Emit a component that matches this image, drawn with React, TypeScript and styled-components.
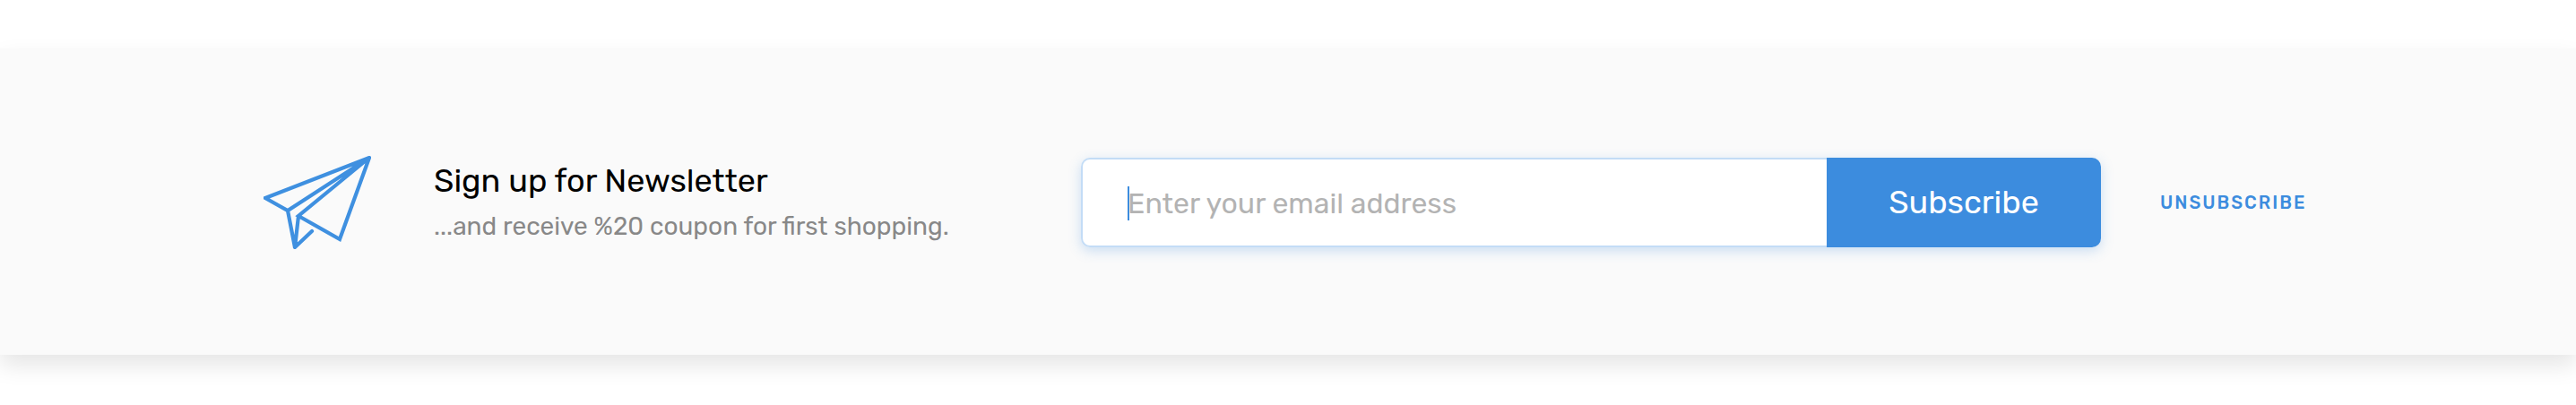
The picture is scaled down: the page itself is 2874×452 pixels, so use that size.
import React from "react";
import styled, { createGlobalStyle } from "styled-components";

const GlobalStyle = createGlobalStyle`
  body { margin: 0; background: #fff; overflow: hidden; }
  * { box-sizing: border-box; }
`;

const Page = styled.main`
  height: 452px;
  padding-top: 54px;
  font-family: Rubik, Roboto, "Liberation Sans", sans-serif;
`;

const Banner = styled.section`
  display: flex;
  align-items: center;
  height: 342px;
  padding: 2px 0 0 294px;
  background: #fafafa;
  box-shadow: 0 12px 24px rgba(0, 0, 0, 0.1);
`;

const PlaneIcon = styled.svg`
  flex: none;
  width: 120px;
  height: 104px;
  fill: none;
  stroke: #429ae8;
  stroke: #3f90e0;
  stroke-width: 4.2;
  stroke-linecap: round;
`;

const Copy = styled.div`
  width: 722px;
  margin-left: 70px;
  white-space: nowrap;
`;

const Title = styled.h2`
  margin: 0;
  font-size: 36px;
  line-height: 50px;
  font-weight: 400;
  color: #000;
`;

const Subtitle = styled.p`
  margin: 4px 0 0;
  font-size: 28px;
  line-height: 44px;
  color: #888;
`;

const Form = styled.div`
  display: flex;
  flex: none;
  width: 1138px;
  height: 100px;
  border-radius: 10px;
  box-shadow: 0 4px 14px rgba(60, 140, 222, 0.25);
`;

const Field = styled.div`
  display: flex;
  align-items: center;
  flex: 1;
  padding-left: 50px;
  background: #fff;
  border: 2px solid #c3dcf6;
  border-right: 0;
  border-radius: 10px 0 0 10px;
`;

const Caret = styled.span`
  width: 2px;
  height: 38px;
  margin-top: 2px;
  background: #3c8cde;
`;

const Placeholder = styled.span`
  padding-top: 2px;
  margin-left: -2px;
  font-size: 32px;
  line-height: 40px;
  color: #b3b3b3;
`;

const SubscribeButton = styled.button`
  width: 306px;
  padding: 0;
  border: 0;
  border-radius: 0 10px 10px 0;
  background: #3c8cde;
  color: #fff;
  font: 400 36px/50px Rubik, Roboto, sans-serif;
`;

const Unsubscribe = styled.a`
  margin-left: 66px;
  font-size: 20px;
  line-height: 24px;
  font-weight: 500;
  letter-spacing: 2px;
  color: #3c8cde;
`;

export default function App() {
  return (
    <Page>
      <GlobalStyle />
      <Banner>
        <PlaneIcon viewBox="0 0 120 104">
          <path d="M118 2 2 47l25 14L118 2 39 67l46 26L118 2M27 61l8 41 4-35M35 102l19-18" />
        </PlaneIcon>
        <Copy>
          <Title>Sign up for Newsletter</Title>
          <Subtitle>...and receive %20 coupon for first shopping.</Subtitle>
        </Copy>
        <Form>
          <Field>
            <Caret />
            <Placeholder>Enter your email address</Placeholder>
          </Field>
          <SubscribeButton>Subscribe</SubscribeButton>
        </Form>
        <Unsubscribe>UNSUBSCRIBE</Unsubscribe>
      </Banner>
    </Page>
  );
}
